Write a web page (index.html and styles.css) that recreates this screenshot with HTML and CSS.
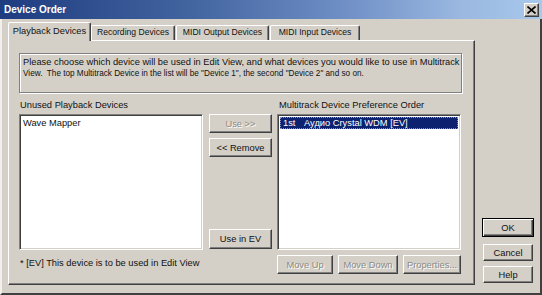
FILE: index.html
```html
<!DOCTYPE html>
<html>
<head>
<meta charset="utf-8">
<link rel="stylesheet" href="styles.css">
</head>
<body>
<div class="window">
  <div class="titlebar">
    <span class="title">Device Order</span>
    <span class="close"><svg width="9" height="8" viewBox="0 0 9 8"><path d="M0.5 0.5 L8.5 7.5 M8.5 0.5 L0.5 7.5" stroke="#000" stroke-width="1.6"/></svg></span>
  </div>
  <div class="content">
    <div class="tabs-area">
      <div class="tabs">
        <div class="tab active w1">Playback Devices</div>
        <div class="tab w2">Recording Devices</div>
        <div class="tab w3">MIDI Output Devices</div>
        <div class="tab w4">MIDI Input Devices</div>
      </div>
      <div class="panel">
        <div class="info">
          <div class="info-l1">Please choose which device will be used in Edit View, and what devices you would like to use in Multitrack</div>
          <div class="info-l2">View.&nbsp; The top Multitrack Device in the list will be "Device 1", the second "Device 2" and so on.</div>
        </div>
        <div class="grid">
          <div class="label">Unused Playback Devices</div>
          <div></div>
          <div class="label">Multitrack Device Preference Order</div>

          <div class="list"><div class="item">Wave Mapper</div></div>
          <div class="mid">
            <div class="btn disabled">Use &gt;&gt;</div>
            <div class="btn">&lt;&lt; Remove</div>
            <div class="spacer"></div>
            <div class="btn">Use in EV</div>
          </div>
          <div class="list"><div class="item selected"><span class="ord">1st</span>Аудио Crystal WDM [EV]</div></div>

          <div class="foot">* [EV] This device is to be used in Edit View</div>
          <div></div>
          <div class="row-btns">
            <div class="btn disabled b-up">Move Up</div>
            <div class="btn disabled b-down">Move Down</div>
            <div class="btn disabled b-prop">Properties...</div>
          </div>
        </div>
      </div>
    </div>
    <div class="side">
      <div class="btn default">OK</div>
      <div class="btn">Cancel</div>
      <div class="btn">Help</div>
    </div>
  </div>
</div>
</body>
</html>
```
FILE: styles.css
```css
html, body {
  margin: 0;
  padding: 0;
  background: #d4d0c8;
}
body {
  font-family: "Liberation Sans", Arial, sans-serif;
  font-size: 9.3px;
  color: #111;
}
.window {
  width: 542px;
  height: 295px;
  box-sizing: border-box;
  display: flex;
  flex-direction: column;
  background: #d4d0c8;
}
.titlebar {
  height: 19px;
  flex: none;
  display: flex;
  align-items: center;
  justify-content: space-between;
  padding: 0 3px 0 4px;
  background: linear-gradient(90deg, #1e3c80 0%, #42649f 35%, #6c8cc4 62%, #9ab8e0 85%, #a8c8ec 100%);
}
.title {
  color: #fff;
  font-weight: bold;
  font-size: 10px;
}
.close {
  width: 15px;
  height: 14px;
  box-sizing: border-box;
  background: #d4d0c8;
  border-top: 1px solid #fff;
  border-left: 1px solid #fff;
  border-right: 1px solid #404040;
  border-bottom: 1px solid #404040;
  box-shadow: inset -1px -1px 0 #808080;
  display: flex;
  align-items: center;
  justify-content: center;
  margin-top: 1px;
}
.content {
  flex: 1;
  display: flex;
  border-left: 2px solid #f2f0ec;
  border-right: 2px solid #404040;
  border-bottom: 2px solid #404040;
  padding: 3px 0 8px 6px;
}
.tabs-area {
  width: 467px;
  display: flex;
  flex-direction: column;
}
.tabs {
  display: flex;
  align-items: flex-end;
  height: 18px;
  position: relative;
  z-index: 1;
}
.tab {
  height: 15px;
  box-sizing: border-box;
  border-top: 1px solid #fff;
  border-left: 1px solid #fff;
  border-right: 1px solid #404040;
  box-shadow: inset -1px 0 0 #808080;
  border-radius: 2px 2px 0 0;
  text-align: center;
  line-height: 13px;
  margin-right: 1px;
  font-size: 8.6px;
}
.tab.active {
  height: 19px;
  margin-bottom: -1px;
  background: #d4d0c8;
  line-height: 16px;
  font-size: 9.3px;
  margin-right: 0;
}
.w1 { width: 83px; }
.w2 { width: 84px; }
.w3 { width: 93px; }
.w4 { width: 90px; }
.panel {
  flex: 1;
  box-sizing: border-box;
  border-top: 1px solid #fff;
  border-left: 1px solid #fff;
  border-right: 1px solid #404040;
  border-bottom: 1px solid #404040;
  box-shadow: inset -1px -1px 0 #808080;
  padding: 12px 12px 9px 10px;
  display: flex;
  flex-direction: column;
}
.info {
  height: 40px;
  box-sizing: border-box;
  border: 1px solid #808080;
  box-shadow: 1px 1px 0 #fff, inset 1px 1px 0 #fff;
  padding: 2px 0 0 3px;
  margin-bottom: 5px;
}
.info-l1 {
  font-size: 9.3px;
  line-height: 12px;
  white-space: nowrap;
}
.info-l2 {
  font-size: 8.2px;
  line-height: 12px;
  white-space: nowrap;
}
.grid {
  display: grid;
  grid-template-columns: 184px 74px 184px;
  grid-template-rows: 16px 136px 24px;
}
.label {
  line-height: 13px;
  padding-left: 1px;
  margin-top: 1px;
}
.grid > .label:nth-child(3) { padding-left: 2px; }
.list {
  background: #fff;
  box-sizing: border-box;
  border-top: 1px solid #808080;
  border-left: 1px solid #808080;
  border-right: 1px solid #fff;
  border-bottom: 1px solid #fff;
  box-shadow: inset 1px 1px 0 #404040, inset -1px -1px 0 #d4d0c8;
  padding: 2px;
}
.item {
  line-height: 12px;
  padding-left: 1px;
}
.item.selected {
  background: #0c2270;
  color: #fff;
  outline: 1px dotted #8890c0;
  outline-offset: -1px;
}
.ord {
  display: inline-block;
  width: 21px;
  padding-left: 2px;
}
.mid {
  margin: 0 5px 0 6px;
  display: flex;
  flex-direction: column;
  gap: 5px;
}
.spacer { flex: 1; }
.btn {
  height: 19px;
  box-sizing: border-box;
  border-top: 1px solid #fff;
  border-left: 1px solid #fff;
  border-right: 1px solid #404040;
  border-bottom: 1px solid #404040;
  box-shadow: inset -1px -1px 0 #808080;
  display: flex;
  align-items: center;
  justify-content: center;
  background: #d4d0c8;
  white-space: nowrap;
}
.mid .btn:last-child { height: 20px; margin-bottom: 1px; }
.btn.disabled {
  color: #8c8a84;
  text-shadow: 1px 1px 0 #fff;
}
.foot {
  padding-left: 1px;
  line-height: 12px;
  margin-top: 7px;
}
.row-btns {
  display: flex;
  gap: 5px;
  margin-top: 5px;
}
.b-up { width: 56px; }
.b-down { width: 60px; }
.b-prop { width: 58px; }
.side {
  width: 52px;
  margin-left: 7px;
  display: flex;
  flex-direction: column;
  justify-content: flex-end;
  align-items: center;
  gap: 5px;
  padding-bottom: 2px;
}
.side .btn {
  width: 50px;
  height: 17px;
}
.side .btn.default {
  width: 52px;
  height: 19px;
  border: 1px solid #000;
  box-shadow: inset 1px 1px 0 #fff, inset -1px -1px 0 #404040, inset -2px -2px 0 #808080;
  margin-bottom: 2px;
}
```
